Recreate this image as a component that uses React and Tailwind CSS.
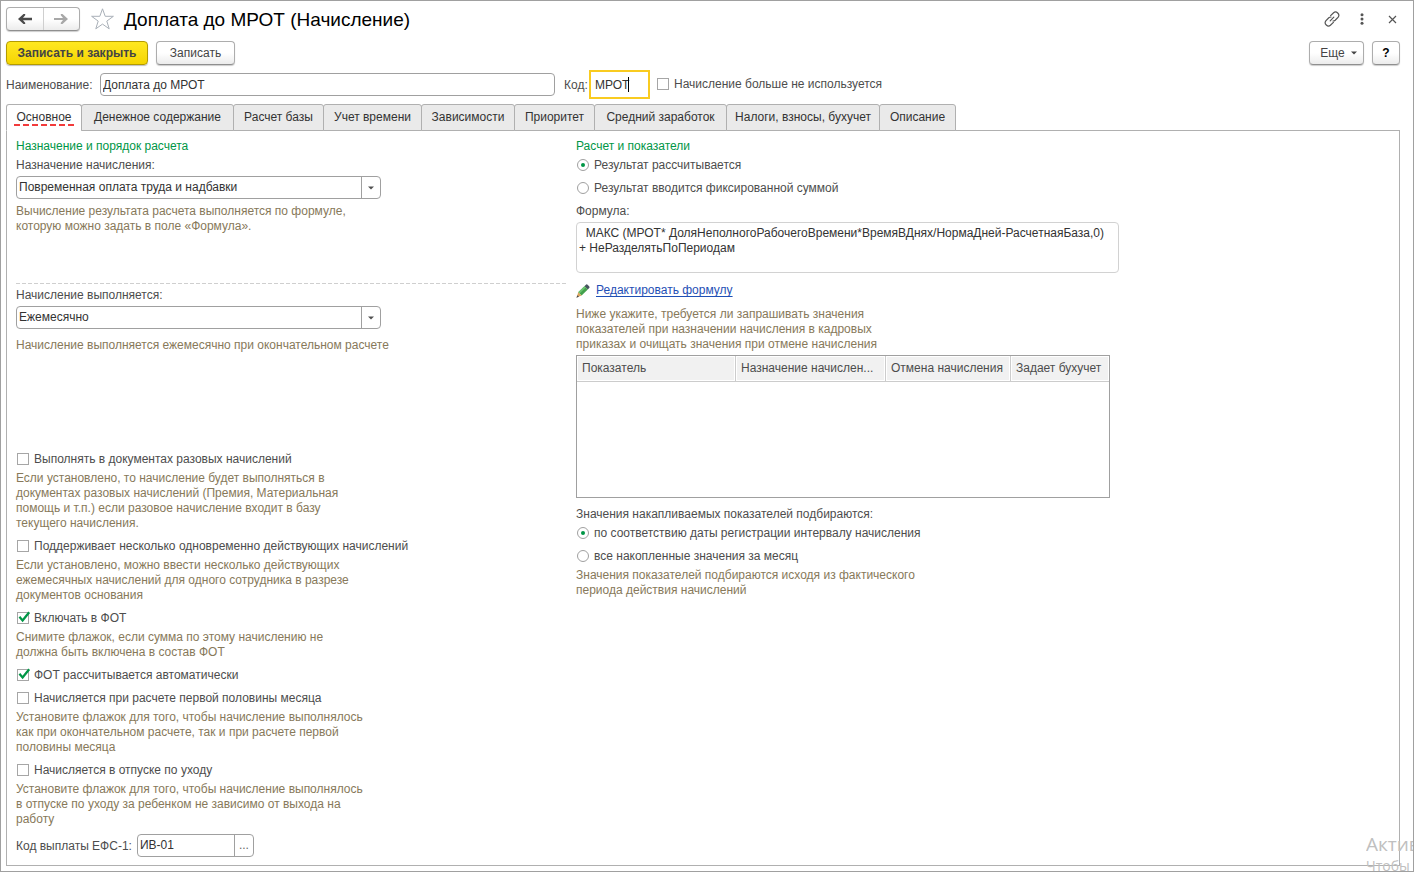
import React, { useState } from "react";

const TABS = [
  { title: "Основное", width: "w-[76px]" },
  { title: "Денежное содержание", width: "w-[153px]" },
  { title: "Расчет базы", width: "w-[91px]" },
  { title: "Учет времени", width: "w-[99px]" },
  { title: "Зависимости", width: "w-[94px]" },
  { title: "Приоритет", width: "w-[81px]" },
  { title: "Средний заработок", width: "w-[133px]" },
  { title: "Налоги, взносы, бухучет", width: "w-[154px]" },
  { title: "Описание", width: "w-[77px]" },
];

const BUTTON =
  "h-6 rounded-sm border border-[#adadad] border-b-[#8f8f8f] bg-linear-to-b from-white from-50% to-[#ececec] shadow-[0_1px_1px_rgba(0,0,0,0.2)] text-[#444444]";

function Check({ label, checked = false }) {
  return (
    <label className="flex h-[15px] items-start gap-[5px] pl-px">
      <span className="relative mt-px flex size-3">
        <input
          type="checkbox"
          defaultChecked={checked}
          className="peer size-3 appearance-none border border-[#a6a6a6] bg-white"
        />
        <svg
          viewBox="0 0 14 13"
          className="pointer-events-none absolute -top-px left-0 hidden h-[13px] w-[14px] peer-checked:block"
        >
          <path d="M2.4 5.8 5.6 9.4 12.2 1.2" fill="none" stroke="#009646" strokeWidth="2.3" />
        </svg>
      </span>
      {label}
    </label>
  );
}

function Radio({ label, name, checked = false }) {
  return (
    <label className="flex h-[15px] items-start gap-[5px] pl-px">
      <span className="relative mt-px flex size-3">
        <input
          type="radio"
          name={name}
          defaultChecked={checked}
          className="peer size-3 appearance-none rounded-full border border-[#a0a0a0] bg-white"
        />
        <span className="pointer-events-none absolute inset-1 hidden rounded-full bg-[#009646] peer-checked:block" />
      </span>
      {label}
    </label>
  );
}

function Hint({ children }) {
  return <p className="whitespace-pre-line text-[#87795a]">{children}</p>;
}

function Choice({ id, value }) {
  return (
    <div className="relative -mt-px mb-px w-[365px]">
      <select
        id={id}
        defaultValue={value}
        className="block h-[23px] w-full appearance-none rounded-sm border border-[#a0a0a0] bg-white pl-0.5 pr-5 text-[#333333]"
      >
        <option>{value}</option>
      </select>
      <span className="pointer-events-none absolute inset-y-0 right-0 flex w-5 items-center justify-center border-l border-[#a0a0a0] pr-0.5">
        <svg viewBox="0 0 6 4" className="h-1 w-1.5" fill="#505050">
          <path d="M0 .5h6L3 3.5z" />
        </svg>
      </span>
    </div>
  );
}

function Option({ label, checked, children }) {
  return (
    <div className="flex flex-col gap-1">
      <Check label={label} checked={checked} />
      {children && <Hint>{children}</Hint>}
    </div>
  );
}

function LeftColumn() {
  return (
    <div className="flex w-[550px] flex-col">
      <section className="flex h-[144px] flex-col gap-1">
        <h2 className="text-[#009646]">Назначение и порядок расчета</h2>
        <label htmlFor="purpose">Назначение начисления:</label>
        <Choice id="purpose" value="Повременная оплата труда и надбавки" />
        <Hint>{"Вычисление результата расчета выполняется по формуле,\nкоторую можно задать в поле «Формула»."}</Hint>
      </section>
      <svg className="h-px w-full" aria-hidden="true">
        <line x1="0" y1="0.5" x2="100%" y2="0.5" stroke="#cfcfcf" strokeDasharray="4 2" />
      </svg>
      <section className="flex h-[168px] flex-col gap-1 pt-1">
        <label htmlFor="period">Начисление выполняется:</label>
        <Choice id="period" value="Ежемесячно" />
        <div className="pt-1">
          <Hint>Начисление выполняется ежемесячно при окончательном расчете</Hint>
        </div>
      </section>
      <section className="flex flex-col gap-2">
        <Option label="Выполнять в документах разовых начислений">
          {"Если установлено, то начисление будет выполняться в\nдокументах разовых начислений (Премия, Материальная\nпомощь и т.п.) если разовое начисление входит в базу\nтекущего начисления."}
        </Option>
        <Option label="Поддерживает несколько одновременно действующих начислений">
          {"Если установлено, можно ввести несколько действующих\nежемесячных начислений для одного сотрудника в разрезе\nдокументов основания"}
        </Option>
        <Option label="Включать в ФОТ" checked>
          {"Снимите флажок, если сумма по этому начислению не\nдолжна быть включена в состав ФОТ"}
        </Option>
        <Option label="ФОТ рассчитывается автоматически" checked />
        <Option label="Начисляется при расчете первой половины месяца">
          {"Установите флажок для того, чтобы начисление выполнялось\nкак при окончательном расчете, так и при расчете первой\nполовины месяца"}
        </Option>
        <Option label="Начисляется в отпуске по уходу">
          {"Установите флажок для того, чтобы начисление выполнялось\nв отпуске по уходу за ребенком не зависимо от выхода на\nработу"}
        </Option>
        <div className="-mt-px flex items-center gap-[5px]">
          <label htmlFor="efs" className="pt-0.5">
            Код выплаты ЕФС-1:
          </label>
          <div className="flex h-[23px] w-[117px] rounded-sm border border-[#a0a0a0]">
            <input id="efs" defaultValue="ИВ-01" className="min-w-0 flex-1 pl-0.5 text-[#333333] outline-none" />
            <button type="button" aria-label="Выбрать" className="w-[19px] border-l border-[#a0a0a0] text-[#666666]">
              ...
            </button>
          </div>
        </div>
      </section>
    </div>
  );
}

function RightColumn() {
  return (
    <div className="flex w-[543px] flex-col gap-2">
      <div className="flex flex-col gap-1">
        <h2 className="text-[#009646]">Расчет и показатели</h2>
        <Radio name="result" label="Результат рассчитывается" checked />
      </div>
      <Radio name="result" label="Результат вводится фиксированной суммой" />
      <div className="flex flex-col gap-1">
        <label htmlFor="formula">Формула:</label>
        <textarea
          id="formula"
          readOnly
          defaultValue={"  МАКС (МРОТ* ДоляНеполногоРабочегоВремени*ВремяВДнях/НормаДней-РасчетнаяБаза,0)\n+ НеРазделятьПоПериодам"}
          className="-mt-px mb-px h-[51px] resize-none overflow-hidden whitespace-pre rounded-sm border border-[#d2d2d2] px-0.5 py-[3px] text-[#333333] outline-none"
        />
      </div>
      <div className="flex h-[17px] items-center gap-1.5">
        <svg viewBox="0 0 14 14" className="size-3.5" aria-hidden="true">
          <path d="M8.400 2.200 10.200.6Q10.900.1 11.600.7L13.300 2.400Q13.900 3.100 13.400 3.800L11.800 5.600z" fill="#47545f" />
          <path d="M8.400 2.200 11.800 5.600 5.600 11.600 2.200 8.200z" fill="#43a04c" />
          <path d="M8.400 2.200 9.800 3.600 3.600 9.600 2.200 8.200z" fill="#6cc470" />
          <path d="M2.200 8.200 5.600 11.600.6 13.600z" fill="#dca45c" />
          <path d="M1.400 11.300 3 12.700.4 13.700z" fill="#44484c" />
        </svg>
        <a href="#formula" className="text-[#1f4fb5] underline underline-offset-2">
          Редактировать формулу
        </a>
      </div>
      <div className="flex flex-col gap-1">
        <Hint>{"Ниже укажите, требуется ли запрашивать значения\nпоказателей при назначении начисления в кадровых\nприказах и очищать значения при отмене начисления"}</Hint>
        <div className="-mt-px mb-px h-[143px] w-[534px] border border-[#a0a0a0]">
          <table className="w-full table-fixed border-separate border-spacing-0">
            <colgroup>
              <col className="w-[159px]" />
              <col className="w-[150px]" />
              <col className="w-[125px]" />
              <col />
            </colgroup>
            <thead>
              <tr className="h-[26px] bg-[#f1f1f1] text-left">
                {["Показатель", "Назначение начислен...", "Отмена начисления", "Задает бухучет"].map((h) => (
                  <th
                    key={h}
                    scope="col"
                    className="overflow-hidden whitespace-nowrap border-r border-b border-[#cccccc] pl-[5px] font-normal shadow-[inset_0_0_0_1px_white] last:border-r-0"
                  >
                    {h}
                  </th>
                ))}
              </tr>
            </thead>
            <tbody />
          </table>
        </div>
      </div>
      <div className="flex flex-col gap-1">
        <p>Значения накапливаемых показателей подбираются:</p>
        <Radio name="values" label="по соответствию даты регистрации интервалу начисления" checked />
      </div>
      <div className="flex flex-col gap-1">
        <Radio name="values" label="все накопленные значения за месяц" />
        <Hint>{"Значения показателей подбираются исходя из фактического\nпериода действия начислений"}</Hint>
      </div>
    </div>
  );
}

function TitleBar() {
  return (
    <header className="flex h-6 items-center">
      <div className={BUTTON + " flex w-[74px]"}>
        <button type="button" aria-label="Назад" className="flex flex-1 items-center justify-center border-r border-[#cfcfcf]">
          <svg viewBox="0 0 14 10" className="h-2.5 w-3.5" fill="#4a4a4a">
            <path d="M0 5 5.500 0H7.200V1.200L5 3.800H14V6.200H5L7.200 8.800V10H5.500z" />
          </svg>
        </button>
        <button type="button" aria-label="Вперед" className="flex flex-1 items-center justify-center">
          <svg viewBox="0 0 14 10" className="h-2.5 w-3.5" fill="#a8a8a8">
            <path d="M14 5 8.500 0H6.800V1.200L9 3.900H0V6.100H9L6.800 8.800V10H8.500z" />
          </svg>
        </button>
      </div>
      <button type="button" aria-label="В избранное" className="ml-[11px] flex">
        <svg viewBox="0 0 24 24" className="size-6" fill="white" stroke="#a9b0b8" strokeWidth="1">
          <path d="M11.5 1.8 14.2 9.3H22.4L15.8 14.1 18.2 21.8 11.5 17.1 4.8 21.8 7.2 14.1.6 9.3H8.800z" />
        </svg>
      </button>
      <h1 className="ml-[9px] pt-0.5 text-[19px] leading-6 text-black">Доплата до МРОТ (Начисление)</h1>
      <div className="ml-auto flex items-center pr-[3px] text-[#555555]">
        <button type="button" aria-label="Ссылка" className="flex">
          <svg viewBox="0 0 16 16" className="size-4" fill="none" stroke="#555555" strokeWidth="1.2" strokeLinecap="round">
            <path d="M6.600 4.600 9.600 1.700Q11.600 0 13.700 2T14.200 6.200L11.200 9.200Q10.300 10 9 10" />
            <path d="M9.400 11.400 6.400 14.300Q4.400 16 2.300 14T1.800 9.800L4.800 6.800Q5.700 6 7 6" />
            <path d="M6.200 9.800 9.800 6.200" />
          </svg>
        </button>
        <button type="button" aria-label="Меню" className="ml-5 flex">
          <svg viewBox="0 0 4 12" className="h-3 w-1" fill="#555555">
            <circle cx="2" cy="1.800" r="1.500" />
            <circle cx="2" cy="6" r="1.500" />
            <circle cx="2" cy="10.200" r="1.500" />
          </svg>
        </button>
        <button type="button" aria-label="Закрыть" className="ml-6 flex">
          <svg viewBox="0 0 9 9" className="size-[9px]" stroke="#555555" strokeWidth="1.200">
            <path d="M1 1 8 8M8 1 1 8" />
          </svg>
        </button>
      </div>
    </header>
  );
}

export default function App() {
  const [active, setActive] = useState(0);
  return (
    <div className="relative flex min-h-screen flex-col overflow-hidden border border-[#a0a0a0] bg-white pt-1.5 pr-[13px] pb-[5px] pl-[5px] font-['Liberation_Sans',Arial,sans-serif] text-[12px] leading-[15px] text-[#4d4d4d]">
      <TitleBar />
      <div className="mt-2.5 flex h-6 gap-2">
        <button
          type="button"
          className="h-6 w-[142px] rounded-sm border border-[#b39b00] bg-linear-to-b from-[#ffe81f] to-[#f5d500] font-bold text-[#444444] shadow-[0_1px_1px_rgba(0,0,0,0.25)]"
        >
          Записать и закрыть
        </button>
        <button type="button" className={BUTTON + " w-[79px]"}>
          Записать
        </button>
        <button type="button" className={BUTTON + " ml-auto flex w-[55px] items-center justify-center gap-1.5 pl-1"}>
          Еще
          <svg viewBox="0 0 6 4" className="h-1 w-1.5" fill="#444444">
            <path d="M0 .5h6L3 3.500z" />
          </svg>
        </button>
        <button type="button" aria-label="Справка" className={BUTTON + " w-7 font-bold text-black"}>
          ?
        </button>
      </div>
      <div className="mt-2 flex h-[23px] items-center">
        <label htmlFor="name" className="w-[94px] pt-0.5">
          Наименование:
        </label>
        <input
          id="name"
          defaultValue="Доплата до МРОТ"
          className="h-[23px] w-[455px] rounded-sm border border-[#a0a0a0] pl-0.5 text-[#333333]"
        />
        <label htmlFor="code" className="ml-[9px] w-[25px] pt-0.5">
          Код:
        </label>
        <span className="relative mr-1.5">
          <input
            id="code"
            defaultValue="МРОТ"
            className="block h-[29px] w-[61px] border-2 border-[#f9cb20] pl-1 text-[#333333] caret-transparent outline-none"
          />
          <span className="absolute top-[7px] left-[39px] h-[15px] w-px bg-black" />
        </span>
        <Check label="Начисление больше не используется" />
      </div>
      <nav role="tablist" className="relative mt-2 flex h-[27px]">
        {TABS.map((tab, i) => (
          <button
            key={tab.title}
            type="button"
            role="tab"
            aria-selected={i === active}
            onClick={() => setActive(i)}
            className={
              "-mr-px flex items-center justify-center rounded-t-[3px] border border-[#b0b0b0] text-[#333333] " +
              tab.width +
              (i === active ? " border-b-white bg-white" : " bg-[#eaeaea]")
            }
          >
            <span className="relative">
              {tab.title}
              {i === active && (
                <svg className="absolute -bottom-px -left-[3px] h-0.5 w-[62px]" aria-hidden="true">
                  <line x1="0" y1="1" x2="62" y2="1" stroke="#f23b3b" strokeWidth="2" strokeDasharray="6 3" />
                </svg>
              )}
            </span>
          </button>
        ))}
      </nav>
      <main className="-mt-px flex flex-1 items-start gap-2.5 border border-[#b0b0b0] px-[9px] pt-2 pb-2">
        <LeftColumn />
        <RightColumn />
      </main>
      <div
        aria-hidden="true"
        className="pointer-events-none absolute right-0 bottom-0 h-[39px] w-[47px] overflow-hidden whitespace-nowrap font-['Open_Sans','Noto_Sans',sans-serif] text-[#c0c0c0]"
      >
        <div className="text-[19px] leading-6">Актив</div>
        <div className="text-[14px] leading-5">Чтобы</div>
      </div>
    </div>
  );
}
